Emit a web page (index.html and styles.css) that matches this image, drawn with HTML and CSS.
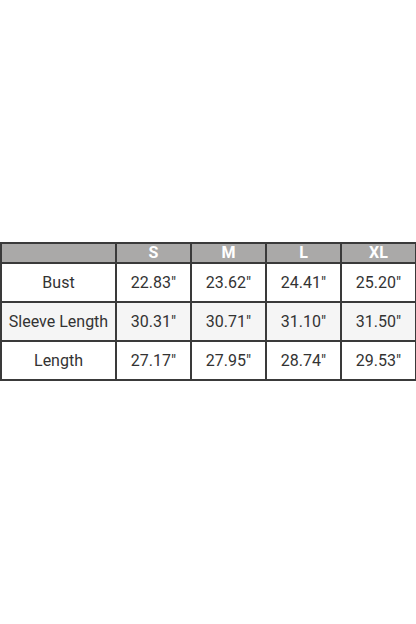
FILE: index.html
```html
<!DOCTYPE html>
<html>
<head>
<meta charset="utf-8">
<link rel="stylesheet" href="styles.css">
</head>
<body>
<div class="page">
<table class="size-table">
<colgroup>
<col class="c-label">
<col class="c-size"><col class="c-size"><col class="c-size"><col class="c-size">
</colgroup>
<thead>
<tr><th></th><th>S</th><th>M</th><th>L</th><th>XL</th></tr>
</thead>
<tbody>
<tr><td>Bust</td><td>22.83"</td><td>23.62"</td><td>24.41"</td><td>25.20"</td></tr>
<tr class="alt"><td>Sleeve Length</td><td>30.31"</td><td>30.71"</td><td>31.10"</td><td>31.50"</td></tr>
<tr><td>Length</td><td>27.17"</td><td>27.95"</td><td>28.74"</td><td>29.53"</td></tr>
</tbody>
</table>
</div>
</body>
</html>
```
FILE: styles.css
```css
html, body {
  margin: 0;
  padding: 0;
  background: #ffffff;
}
.page {
  width: 416px;
  height: 624px;
  padding-top: 242px;
  box-sizing: border-box;
}
.size-table {
  width: 416px;
  border-collapse: collapse;
  table-layout: fixed;
  font-family: Roboto, "Liberation Sans", sans-serif;
  font-size: 16px;
  color: #333333;
}
.c-label { width: 115px; }
.c-size { width: 75px; }
.size-table th,
.size-table td {
  border: 2px solid #3a3a3a;
  text-align: center;
  padding: 0;
}
.size-table th {
  background: #aaa9a8;
  color: #ffffff;
  font-weight: 700;
  height: 18px;
  font-size: 16px;
  line-height: 18px;
}
.size-table td {
  height: 37px;
}
.size-table tr.alt td {
  background: #f5f5f5;
}
```
